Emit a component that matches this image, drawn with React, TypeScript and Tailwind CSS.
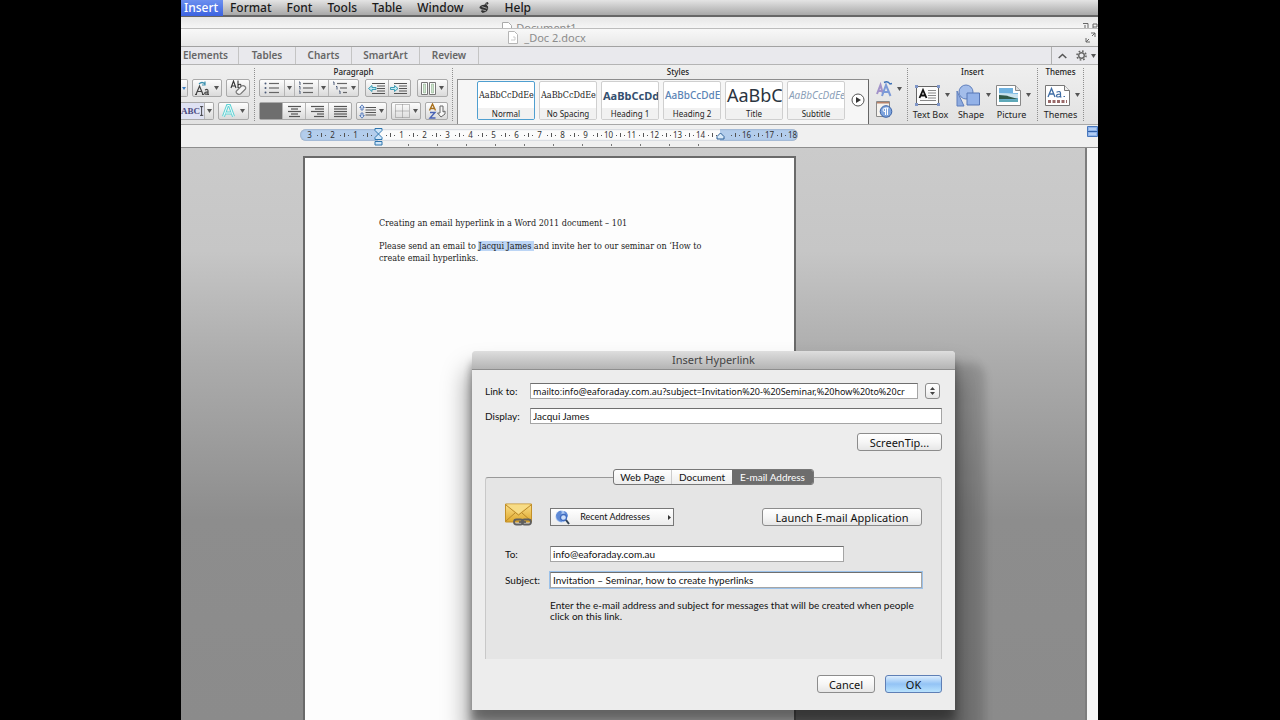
import React from "react";

const btn =
  "flex h-[18px] items-center justify-center rounded-[2px] border border-[#a9a9a9] bg-gradient-to-b from-[#fdfdfd] to-[#dadada]";
const seg = "flex h-full items-center justify-center border-r border-[#b5b5b5]";
const field =
  "border border-[#a5a5a5] border-t-[#6f6f6f] bg-white px-[2px] leading-3 text-[#111] outline-none";
const push =
  "rounded-[3px] border border-[#8c8c8c] bg-gradient-to-b from-white via-[#f6f6f6] to-[#e6e6e6] font-['Noto_Sans',sans-serif] text-[11px] leading-none text-[#111]";
const groupTitle = "h-[14px] text-center text-[8px] font-medium leading-[13px]";

function Caret() {
  return (
    <svg width="5" height="4" viewBox="0 0 5 4" className="shrink-0">
      <path d="M0 0h5L2.500 4z" fill="#555" />
    </svg>
  );
}

function Lines({ rows, stroke = "#555" }: { rows: [number, number][]; stroke?: string }) {
  return (
    <svg width="15" height="13" viewBox="0 0 15 13">
      {rows.map(([a, b], i) => (
        <path key={i} d={`M${a} ${1.5 + i * 2.5}H${b}`} stroke={stroke} strokeWidth="1.200" />
      ))}
    </svg>
  );
}

function ListIcon({ kind }: { kind: "bullet" | "number" | "multi" }) {
  return (
    <svg width="17" height="14" viewBox="0 0 17 14">
      {[0, 1, 2].map((i) => {
        const o = kind === "multi" ? i * 3 : 0;
        return (
          <g key={i}>
            {kind === "bullet" ? (
              <circle cx="1.500" cy={2.5 + i * 4.5} r="1" fill="#4a5a78" />
            ) : (
              <path d={`M${1 + o} ${1 + i * 4.5}h1v3`} fill="none" stroke="#4a5a78" />
            )}
            <path d={`M${5 + o} ${2.5 + i * 4.5}H15`} stroke="#666" strokeWidth="1.200" />
          </g>
        );
      })}
    </svg>
  );
}

function IndentIcon({ left }: { left?: boolean }) {
  return (
    <svg width="18" height="13" viewBox="0 0 18 13">
      <path d="M4 1.500h13M9 4h8M9 6.500h8M9 9h8M4 11.500h13" stroke="#555" strokeWidth="1.200" />
      <path
        d={left ? "M0.500 6.500l3.500-3v2h4v2H4v2z" : "M8 6.500l-3.500-3v2h-4v2h4v2z"}
        fill="#bfeaf5"
        stroke="#2a93ad"
        strokeWidth=".9"
      />
    </svg>
  );
}

function Dots() {
  return <div className="my-[3px] w-0 shrink-0 self-stretch border-l border-dotted border-[#8e8e8e]" />;
}

function Ribbon() {
  return (
    <div className="flex h-[60px] border-b border-[#a8a8a8] bg-gradient-to-b from-[#efefef] to-[#e2e2e2] text-[#222]">
      <section aria-label="Font" className="flex w-[73px] shrink-0 flex-col pt-[14px]">
        <div className="flex gap-1">
          <button aria-label="Font size" className={`${btn} w-[7px] rounded-l-none border-l-0`}>
            <svg width="4" height="4" viewBox="0 0 4 4"><path d="M0 1h4L2 4z" fill="#3d7fc4" /></svg>
          </button>
          <button aria-label="Change case" className={`${btn} w-[30px] gap-1`}>
            <svg width="15" height="15" viewBox="0 0 15 15" fill="none" stroke="#444" strokeWidth="1.200">
              <path d="M1 13.500L4.500 5 8 13.500M2.300 10.500h4.500M0 13.500h2M7 13.500h2" />
              <path d="M10 9q3-1.500 3 1v3.500h1M13 10.800q-3.500 0-3.300 1.500t3.300.4" />
              <path d="M4 3q3-3 6 0M10 .5V4H7" stroke="#3a8fae" />
            </svg>
            <Caret />
          </button>
          <button aria-label="Clear formatting" className={`${btn} w-6`}>
            <svg width="17" height="16" viewBox="0 0 17 16" fill="none" stroke="#333" strokeWidth="1.100">
              <path d="M1 8l2.500-7L6 8M2 6h3M8 .5V8M8 5q3-2 3 1T8 7.500" />
              <path d="M6.500 11l5-5q2-1 3.500 .5t0 3l-4.500 4.500q-2 1-3.500-.5t-.5-2.500z" fill="#f5f5f5" stroke="#777" />
            </svg>
          </button>
        </div>
        <div className="mt-[5px] flex gap-1">
          <div className={`${btn} w-[33px] rounded-l-none border-l-0`}>
            <button aria-label="Highlight" className={`${seg} w-6 bg-[#dfe2f3]`}>
              <span className="font-['Liberation_Serif',serif] text-[9px] font-bold leading-none text-[#4b4b82]">ABC</span>
              <svg width="5" height="12" viewBox="0 0 5 12"><path d="M0 .5h4M2 .5v11M0 11.500h4" stroke="#222" fill="none" /></svg>
            </button>
            <button aria-label="Highlight colors" className="flex h-full flex-1 items-center justify-center"><Caret /></button>
          </div>
          <button aria-label="Text effects" className={`${btn} w-[31px] gap-[5px]`}>
            <svg width="13" height="14" viewBox="0 0 13 14">
              <path d="M1.500 12.500l4-11h2l4 11M3.500 9h6" fill="none" stroke="#62d2d4" strokeWidth="3" />
              <path d="M1.500 12.500l4-11h2l4 11M3.500 9h6" fill="none" stroke="#f4ffff" strokeWidth="1" />
            </svg>
            <Caret />
          </button>
        </div>
      </section>
      <Dots />
      <section aria-label="Paragraph" className="flex w-[197px] shrink-0 flex-col px-[4px]">
        <h2 className={groupTitle}>Paragraph</h2>
        <div className="flex justify-between">
          <div className={`${btn} w-[100px]`}>
            <button aria-label="Bullets" className={`${seg} w-[25px]`}><ListIcon kind="bullet" /></button>
            <button aria-label="Bullet styles" className={`${seg} w-[10px]`}><Caret /></button>
            <button aria-label="Numbering" className={`${seg} w-6`}><ListIcon kind="number" /></button>
            <button aria-label="Numbering styles" className={`${seg} w-[10px]`}><Caret /></button>
            <button aria-label="Multilevel list" className="flex h-full flex-1 items-center justify-center gap-[2px]">
              <ListIcon kind="multi" />
              <Caret />
            </button>
          </div>
          <div className={`${btn} w-[46px]`}>
            <button aria-label="Decrease indent" className={`${seg} flex-1`}><IndentIcon left /></button>
            <button aria-label="Increase indent" className="flex h-full flex-1 items-center justify-center"><IndentIcon /></button>
          </div>
          <button aria-label="Columns" className={`${btn} w-[31px] gap-[3px]`}>
            <svg width="15" height="13" viewBox="0 0 15 13">
              <path d="M.5.500h6v12h-6zM8.500.500h6v12h-6z" fill="#fff" stroke="#777" />
              <path d="M2.500 2h2v9h-2zM10.500 2h2v9h-2z" fill="#cfe6cf" stroke="#8fae8f" strokeWidth=".6" />
            </svg>
            <Caret />
          </button>
        </div>
        <div className="mt-[5px] flex justify-between">
          <div className={`${btn} w-[93px]`}>
            <button aria-label="Align left" className={`${seg} w-[23px] bg-[#6e6e6e]`} />
            <button aria-label="Center" className={`${seg} w-[23px]`}><Lines rows={[[1, 14], [4, 11], [1, 14], [4, 11], [2, 13]]} /></button>
            <button aria-label="Align right" className={`${seg} w-[23px]`}><Lines rows={[[1, 14], [5, 14], [1, 14], [7, 14], [4, 14]]} /></button>
            <button aria-label="Justify" className="flex h-full flex-1 items-center justify-center"><Lines rows={[[1, 14], [1, 14], [1, 14], [1, 14], [1, 14]]} /></button>
          </div>
          <button aria-label="Line spacing" className={`${btn} w-[31px] gap-[2px]`}>
            <svg width="18" height="15" viewBox="0 0 18 15">
              <path d="M6.500 3.500H17M6.500 6H17M6.500 8.500H17M6.500 11H17" stroke="#555" strokeWidth="1.200" />
              <path d="M3 .8l2.300 2.700H4v2.500H2V3.500H.7zM3 14.200l2.300-2.700H4V9H2v2.500H.7z" fill="#dbe6f8" stroke="#5277b5" strokeWidth=".9" />
            </svg>
            <Caret />
          </button>
          <button aria-label="Borders" className={`${btn} w-[30px] gap-[3px]`}>
            <svg width="15" height="14" viewBox="0 0 15 14">
              <path d="M.5.500h14v13H.5zM7.500.500v13M.5 7h14" fill="none" stroke="#888" strokeDasharray="1 1" />
            </svg>
            <Caret />
          </button>
          <button aria-label="Sort" className={`${btn} w-[23px]`}>
            <svg width="18" height="16" viewBox="0 0 18 16" fill="none">
              <path d="M1.500 7.500L4.500 1l3 6.500M2.500 5.500h4" stroke="#a8701c" strokeWidth="1.400" />
              <path d="M2 9.500h5l-5 5.500h5.500" stroke="#4862b5" strokeWidth="1.400" />
              <path d="M12 3v7H9.500l3.500 4 4-3V8l-2 1V3z" fill="#f7f7f7" stroke="#666" />
            </svg>
          </button>
        </div>
      </section>
      <Dots />
      <section aria-label="Styles" className="flex min-w-0 flex-1 flex-col pl-[4px]">
        <h2 className={`${groupTitle} pr-2`}>Styles</h2>
        <div className="flex">
          <div className="flex h-[45px] min-w-0 flex-1 items-start border border-b-0 border-[#8d8d8d] border-r-[#666] bg-[#f6f6f6] pl-[19px] pr-[3px] pt-px">
            <div className="flex flex-1 justify-between">
              <StyleCard name="Normal" sample="font-['DejaVu_Serif_Condensed','DejaVu_Serif',serif] text-[9px] text-[#222]" active />
              <StyleCard name="No Spacing" sample="font-['DejaVu_Serif_Condensed','DejaVu_Serif',serif] text-[9px] text-[#222]" />
              <StyleCard name="Heading 1" sample="text-[11px] font-bold text-[#34506f]" />
              <StyleCard name="Heading 2" sample="text-[10px] font-medium text-[#5a83b5]" />
              <StyleCard name="Title" sample="text-[18px] text-[#2b3440]" />
              <StyleCard name="Subtitle" sample="text-[10px] italic text-[#8ba0b8]" />
            </div>
            <button aria-label="More styles" className="ml-[6px] mt-3 shrink-0">
              <svg width="14" height="14" viewBox="0 0 14 14">
                <circle cx="7" cy="7" r="6" fill="#fff" stroke="#555" />
                <path d="M5 4l5 3-5 3z" fill="#333" />
              </svg>
            </button>
          </div>
          <div className="flex w-[38px] shrink-0 flex-col items-start gap-[3px] pl-[7px] pt-[1px]">
            <button aria-label="Change styles" className="flex items-center gap-1">
              <svg width="17" height="18" viewBox="0 0 17 18" fill="none" strokeWidth="2">
                <path d="M1 14L4.500 5 7 14M2.500 11h4" stroke="#a292c9" />
                <path d="M6 16l4-11 4.500 11M8 12h5" stroke="#7d9bd8" />
                <path d="M8 2.500q4-2 6 1.500l2-.5" stroke="#3a6fb5" strokeWidth="1.400" />
              </svg>
              <Caret />
            </button>
            <button aria-label="Paragraph marks">
              <svg width="17" height="17" viewBox="0 0 17 17">
                <path d="M.5.500h13v15H.5z" fill="#f6f3ee" stroke="#8a8a8a" />
                <path d="M1 1h12v1.500H1z" fill="#b8836a" />
                <circle cx="10" cy="10.500" r="5.800" fill="#7ea4dd" stroke="#3b62a5" />
                <path d="M9.500 14V7h3M11.500 14V7M9.500 7q-2.500 .2-2.500 2t2.500 1.800" stroke="#fff" fill="none" />
              </svg>
            </button>
          </div>
        </div>
      </section>
      <Dots />
      <section aria-label="Insert" className="flex w-[129px] shrink-0 flex-col">
        <h2 className={groupTitle}>Insert</h2>
        <div className="flex flex-1 justify-between pl-[3px] pr-[6px]">
          <BigTool label="Text Box">
            <svg width="25" height="21" viewBox="0 0 25 21">
              <path d="M1.500 1.500h22v18h-22z" fill="#fbfbfb" stroke="#666" />
              <path d="M0 0h3v3H0zM22 0h3v3h-3zM0 18h3v3H0zM22 18h3v3h-3z" fill="#7f96c8" />
              <path d="M4.500 13L8 5l3.500 8M5.500 10.500h5" fill="none" stroke="#111" strokeWidth="1.800" />
              <path d="M13 5.500h8M13 8h8M13 10.500h8M13 13h8M5 15.500h16" stroke="#888" />
            </svg>
          </BigTool>
          <BigTool label="Shape">
            <svg width="25" height="23" viewBox="0 0 25 23">
              <path d="M1 7v15h7z" fill="#8eabdf" stroke="#5f7fbd" />
              <circle cx="10" cy="8" r="7" fill="#a3bdea" stroke="#5f7fbd" />
              <path d="M11 9h12.500v12H11z" fill="#93b2e8" stroke="#5676b5" />
            </svg>
          </BigTool>
          <BigTool label="Picture">
            <svg width="25" height="21" viewBox="0 0 25 21">
              <path d="M.5.500h19l5 5v15H.5z" fill="#fff" stroke="#888" />
              <path d="M19.500.500v5h5" fill="#ddd" stroke="#888" />
              <path d="M3 3h14v5h5v9H3z" fill="#6fb2e0" />
              <path d="M3 8q8 0 19 1v4H3z" fill="#c9e3ef" />
              <path d="M3 10q7 0 10 1.500l9 2.500H3z" fill="#2f5a49" />
              <path d="M3 14q8 1 19 0v3H3z" fill="#5fa9b8" />
            </svg>
          </BigTool>
        </div>
      </section>
      <Dots />
      <section aria-label="Themes" className="flex w-[45px] shrink-0 flex-col">
        <h2 className={groupTitle}>Themes</h2>
        <div className="flex flex-1 justify-center">
          <BigTool label="Themes">
            <svg width="25" height="21" viewBox="0 0 25 21">
              <path d="M.5.500h19l5 5v15H.5z" fill="#fff" stroke="#777" />
              <path d="M19.500.500v5h5" fill="#eee" stroke="#777" />
              <path d="M3 12L6.500 3.500 10 12M4.500 9h4" fill="none" stroke="#3f6da5" strokeWidth="1.300" />
              <path d="M11.500 7.200q4-1.800 4 1v3.800h1M15.500 9q-4.500 .2-4 2t4 .3M18.500 11.500h1.500" fill="none" stroke="#3f6da5" strokeWidth="1.200" />
              <path d="M3 16.500h19" stroke="#9a6a6a" strokeWidth="3" strokeDasharray="3 1.500" />
            </svg>
          </BigTool>
        </div>
      </section>
      <Dots />
      <div className="w-[14px] shrink-0" />
    </div>
  );
}

function StyleCard({ name, sample, active }: { name: string; sample: string; active?: boolean }) {
  return (
    <button
      className={`flex h-[39px] w-[58px] flex-col overflow-hidden rounded-[2px] border bg-white ${
        active ? "border-[#4f9fd0]" : "border-[#cfcfcf]"
      }`}
    >
      <span className="flex h-[26px] w-full items-center overflow-hidden pl-px">
        <span className={`whitespace-nowrap leading-none ${sample}`}>
          {name === "Title" ? "AaBbC" : "AaBbCcDdEe"}
        </span>
      </span>
      <span className="w-full whitespace-nowrap bg-[#f1f1f1] text-center text-[8px] leading-[11px] text-[#222]">{name}</span>
    </button>
  );
}

function BigTool({ label, children }: { label: string; children: React.ReactNode }) {
  return (
    <button className="flex flex-col items-center justify-between pb-[2px] pt-1">
      <span className="flex h-[24px] items-center gap-[5px] pl-1">
        {children}
        <Caret />
      </span>
      <span className="whitespace-nowrap text-[9px] leading-[14px]">{label}</span>
    </button>
  );
}

function Ruler() {
  const marks = Array.from({ length: 22 }, (_, i) => i - 3);
  return (
    <div className="relative h-[23px] border-b border-[#8d8d8d] bg-[#f0f0f0] pl-[119px] pt-[4px]">
      <div className="flex h-[12px] w-[498px] items-center overflow-hidden rounded-full bg-[linear-gradient(90deg,#b3cdec_78px,#fbfbfb_78px,#fbfbfb_420px,#b3cdec_420px)] pl-1 shadow-[inset_0_0_2px_#7d8a9c]">
        {marks.map((m) => (
          <div key={m} className="flex w-[23px] shrink-0 items-center">
            <span className="flex w-[11px] justify-center text-[8px] leading-none text-[#333]">
              {m === 0 || m === 15 ? "" : Math.abs(m)}
            </span>
            <span className="flex w-3 items-center justify-around">
              <i className="h-px w-px bg-[#555]" />
              <i className="h-1 w-px bg-[#555]" />
              <i className="h-px w-px bg-[#555]" />
            </span>
          </div>
        ))}
      </div>
      <div className="flex gap-[28px] pl-[108px] pt-[3px]">
        {Array.from({ length: 11 }, (_, i) => (
          <i key={i} className="h-[2px] w-px bg-[#777]" />
        ))}
      </div>
      <svg className="absolute left-[193px] top-[3px]" width="9" height="18" viewBox="0 0 9 18" fill="#cfe6fa" stroke="#2d74ad">
        <path d="M1 .5h7v2L4.500 6 1 2.500zM4.500 6L8 9.500v2H1v-2zM1 13.500h7v3.500H1z" />
      </svg>
      <svg className="absolute left-[535px] top-[7px]" width="9" height="8" viewBox="0 0 9 8" fill="#d8eafa" stroke="#2d5f95">
        <path d="M4.500 1L8 4.500V7H1V4.500z" />
      </svg>
      <svg className="absolute right-0 top-px" width="11" height="11" viewBox="0 0 11 11">
        <path d="M.5.500h10v10H.5z" fill="#8fb4ea" stroke="#4a78bd" />
        <path d="M1 5.500h9" stroke="#2f5fa8" />
        <path d="M2 3h7M2 8h7" stroke="#d5e5fb" />
      </svg>
    </div>
  );
}

function Dialog() {
  return (
    <form
      role="dialog"
      aria-label="Insert Hyperlink"
      onSubmit={(e) => e.preventDefault()}
      className="absolute left-[291px] top-[203px] w-[483px] rounded-t-[4px] bg-[#ededed] pb-[17px] shadow-[0_10px_8px_0_rgba(0,0,0,0.3),0_24px_24px_6px_rgba(0,0,0,0.35),14px_28px_8px_16px_rgba(0,0,0,0.14)]"
    >
      <h1 className="flex h-[19px] items-center justify-center rounded-t-[4px] border-b border-[#8e8e8e] bg-gradient-to-b from-[#dedede] to-[#b4b4b4] text-[11px] text-[#444]">
        Insert Hyperlink
      </h1>
      <div className="px-[13px] pt-[13px] font-[Lato,sans-serif] text-[10px] leading-3 text-[#111]">
        <div className="flex h-4 items-center">
          <label htmlFor="link" className="w-[45px] shrink-0">Link to:</label>
          <input
            id="link"
            className={`${field} h-4 min-w-0 flex-1 font-['Noto_Sans',sans-serif] text-[9px]`}
            defaultValue="mailto:info@eaforaday.com.au?subject=Invitation%20-%20Seminar,%20how%20to%20cr"
          />
          <button type="button" aria-label="Recent links" className={`${push} ml-[7px] mr-[2px] flex h-4 w-[15px] items-center justify-center`}>
            <svg width="5" height="8" viewBox="0 0 5 8"><path d="M0 3l2.500-3L5 3zM0 5l2.500 3L5 5z" fill="#444" /></svg>
          </button>
        </div>
        <div className="mt-[9px] flex h-4 items-center">
          <label htmlFor="display" className="w-[45px] shrink-0">Display:</label>
          <input id="display" className={`${field} h-4 min-w-0 flex-1 text-[10px]`} defaultValue="Jacqui James" />
        </div>
        <div className="mt-[9px] flex justify-end">
          <button type="button" className={`${push} h-[18px] w-[85px]`}>ScreenTip...</button>
        </div>
        <div role="tablist" className="relative z-10 mt-[18px] flex justify-center">
          <div className="flex h-4 overflow-hidden rounded-[3px] border border-[#777] bg-gradient-to-b from-white to-[#ededed]">
            <button type="button" role="tab" aria-selected="false" className="w-[57px]">Web Page</button>
            <button type="button" role="tab" aria-selected="false" className="w-[61px] border-l border-[#ccc]">Document</button>
            <button type="button" role="tab" aria-selected="true" className="w-[81px] bg-[#6d6d6d] text-white">E-mail Address</button>
          </div>
        </div>
        <div role="tabpanel" className="-mt-2 h-[182px] rounded-t-[3px] border border-b-0 border-[#c8c8c8] border-t-[#999] bg-[#e5e5e5] px-[19px] pt-[25px]">
          <div className="flex items-end">
            <svg width="28" height="23" viewBox="0 0 28 23" className="shrink-0">
              <defs>
                <linearGradient id="mail" x1="0" x2="0" y1="0" y2="1">
                  <stop offset="0" stopColor="#fbe08a" />
                  <stop offset="1" stopColor="#dfa82c" />
                </linearGradient>
              </defs>
              <path d="M.5 1h26v18H.5z" fill="url(#mail)" stroke="#c39029" />
              <path d="M1 18l9-8M26 18l-9-8M1 2l12.500 10L26 2" fill="none" stroke="#b9882a" />
              <path d="M2 1.500h23L13.500 11z" fill="#f7dc86" />
              <g fill="none" stroke="#5f5f5f" strokeWidth="1.800">
                <rect x="9" y="16.500" width="9" height="5" rx="2.500" />
                <rect x="17" y="16.500" width="9" height="5" rx="2.500" />
                <path d="M14 19h7" />
              </g>
            </svg>
            <button type="button" aria-haspopup="menu" className="ml-[17px] flex h-[18px] w-[124px] items-center border border-[#777] bg-gradient-to-b from-white to-[#ececec] pl-1 pr-[2px] text-[9px]">
              <svg width="15" height="15" viewBox="0 0 15 15">
                <circle cx="6.500" cy="6.500" r="6" fill="#a9c6f2" />
                <path d="M1 5q3-5 5-4T5 6l2 6q-6-1-6-7zM9 1q4 1 4 6l-3-2z" fill="#5f8ad6" />
                <circle cx="8.500" cy="7.500" r="3" fill="#cfe0fa" stroke="#3f6bc0" strokeWidth="1.300" />
                <path d="M11 10l3 4" stroke="#345" strokeWidth="2" />
              </svg>
              <span className="flex-1 pr-4 pl-2 text-center">Recent Addresses</span>
              <svg width="3" height="5" viewBox="0 0 3 5"><path d="M0 0l3 2.500L0 5z" fill="#333" /></svg>
            </button>
            <button type="button" className={`${push} ml-auto h-[18px] w-[160px]`}>Launch E-mail Application</button>
          </div>
          <div className="mt-[20px] flex h-4 items-center">
            <label htmlFor="to" className="w-[45px] shrink-0">To:</label>
            <input id="to" className={`${field} h-4 w-[294px] text-[10px]`} defaultValue="info@eaforaday.com.au" />
          </div>
          <div className="mt-[10px] flex h-4 items-center">
            <label htmlFor="subject" className="w-[45px] shrink-0">Subject:</label>
            <input
              id="subject"
              className={`${field} h-4 min-w-0 flex-1 border-[#5b93cc] text-[10px] shadow-[0_0_0_1px_#9cc2ea]`}
              defaultValue="Invitation – Seminar, how to create hyperlinks"
            />
          </div>
          <p className="ml-[45px] mt-3 leading-[11px]">
            Enter the e-mail address and subject for messages that will be created when people click on this link.
          </p>
        </div>
        <div className="mt-[16px] flex justify-end gap-[10px]">
          <button type="button" className={`${push} h-[18px] w-[58px]`}>Cancel</button>
          <button type="submit" className="h-[18px] w-[57px] rounded-[3px] border border-[#5f7fb5] bg-gradient-to-b from-[#dcedfd] via-[#93c3f5] to-[#b8e2fd] font-['Noto_Sans',sans-serif] text-[11px] leading-none text-[#111]">
            OK
          </button>
        </div>
      </div>
    </form>
  );
}

export default function App() {
  return (
    <div className="flex min-h-screen justify-center bg-black pl-[181px] pr-[182px] font-['Noto_Sans',sans-serif]">
      <main className="flex min-w-0 flex-1 flex-col overflow-hidden bg-[#ececec]">
        <nav className="flex h-[17px] items-center border-b-2 border-[#666] bg-gradient-to-b from-[#e4e4e4] to-[#a8a8a8] text-[12px] font-medium leading-none text-[#1a1a1a]">
          <a href="#insert" className="flex h-[17px] w-[42px] items-center pl-[3px] bg-gradient-to-b from-[#6f92f0] to-[#3c62e0] text-white">Insert</a>
          <div className="flex items-center gap-[15px] pl-[7px]">
            <a href="#format">Format</a>
            <a href="#font">Font</a>
            <a href="#tools">Tools</a>
            <a href="#table">Table</a>
            <a href="#window">Window</a>
            <a href="#scripts" aria-label="Scripts">
              <svg width="11" height="13" viewBox="0 0 12 13">
                <path d="M6 3.500q1-3 3.500-3l1 1.500-2 2q2 1 1.500 3.500T7 11.500l-3 1-2-2 1.500-1.500-3-2q0-3 5.500-3.500z" fill="#333" />
                <path d="M3 5.500l6 2M3.500 9l4 1M7 2.500l2 .5" stroke="#ccc" strokeWidth=".8" />
              </svg>
            </a>
            <a href="#help">Help</a>
          </div>
        </nav>
        <div className="flex h-[12px] items-start justify-center overflow-hidden border-b border-[#bdbdbd] bg-gradient-to-b from-[#e6e6e6] to-[#f6f6f6]">
          <div className="flex flex-1 items-center justify-center gap-1 pr-[184px] pt-[5px] text-[11px] leading-3 text-[#8a8a8a]">
            <svg width="10" height="12" viewBox="0 0 10 12"><path d="M.5.500h6l3 3v8h-9z" fill="#fff" stroke="#aaa" /></svg>
            Document1
          </div>
          <svg width="16" height="12" viewBox="0 0 16 12" fill="none" stroke="#666" className="shrink-0">
            <path d="M1 6.500h5v5M3 8v4M11 11V7h4v3h-4" />
          </svg>
        </div>
        <div className="flex h-[18px] items-center border-b border-[#a2a2a2] bg-gradient-to-b from-[#f8f8f8] to-[#e8e8e8]">
          <div className="flex flex-1 items-center justify-center gap-[6px] pr-[172px] text-[11px] leading-none text-[#8c8c8c]">
            <svg width="10" height="13" viewBox="0 0 10 13"><path d="M.5.500h6l3 3v9h-9z" fill="#fff" stroke="#b5b5b5" /><path d="M3 9h4V6H5" fill="none" stroke="#ccc" /></svg>
            _Doc 2.docx
          </div>
          <button aria-label="Full screen" className="mr-[2px]">
            <svg width="11" height="11" viewBox="0 0 11 11" fill="none" stroke="#666"><path d="M6 1h4v4M7 4l3-3M5 10H1V6M4 7l-3 3" /></svg>
          </button>
        </div>
        <div className="flex h-[18px] items-center border-b border-[#b4b4b4] bg-[#e9e9ed] text-[10px] font-semibold leading-none text-[#666]">
          <button className="h-[17px] w-[58px] border-r border-[#c4c4c4] pb-px pr-[8px]">Elements</button>
          <button className="h-[17px] w-[57px] border-r border-[#c4c4c4] pb-px">Tables</button>
          <button className="h-[17px] w-[56px] border-r border-[#c4c4c4] pb-px">Charts</button>
          <button className="h-[17px] w-[68px] border-r border-[#c4c4c4] pb-px">SmartArt</button>
          <button className="h-[17px] w-[59px] border-r border-[#c4c4c4] pb-px">Review</button>
          <div className="ml-auto flex h-[17px] items-center gap-[9px] border-l border-[#b0b0b0] pl-[6px] pr-[2px]">
            <button aria-label="Collapse ribbon">
              <svg width="9" height="6" viewBox="0 0 9 6"><path d="M.7 5L4.500 1.500 8.300 5" fill="none" stroke="#555" strokeWidth="1.500" /></svg>
            </button>
            <button aria-label="Ribbon options" className="flex items-center gap-1">
              <svg width="11" height="11" viewBox="0 0 11 11" fill="none" stroke="#666">
                <circle cx="5.500" cy="5.500" r="2.800" strokeWidth="1.400" />
                <circle cx="5.500" cy="5.500" r="4.500" strokeWidth="1.600" strokeDasharray="1.700 1.834" />
              </svg>
              <Caret />
            </button>
          </div>
        </div>
        <Ribbon />
        <Ruler />
        <div className="relative flex flex-1 bg-[#f7f7f7] pr-[11px]">
          <div className="flex flex-1 border-r-2 border-[#7d7d7d] bg-[linear-gradient(180deg,#cbcbcb_0%,#c6c6c6_18%,#acacac_37%,#8d8d8d_65%,#8b8b8b_100%)] pl-[122px] pt-[8px]">
            <article className="w-[493px] border-2 border-b-0 border-[#6a6a6a] bg-[#fdfdfd] pl-[74px] pr-[78px] pt-[59px] font-['DejaVu_Serif_Condensed','DejaVu_Serif',serif] text-[9px] leading-3 text-[#222]">
              <p>Creating an email hyperlink in a Word 2011 document – 101</p>
              <p className="mt-[11px]">
                Please send an email to <mark className="bg-[#bcd5f5] text-inherit">Jacqui James </mark>and invite her to our seminar on ‘How to create email hyperlinks.
              </p>
            </article>
          </div>
          <Dialog />
        </div>
      </main>
    </div>
  );
}
